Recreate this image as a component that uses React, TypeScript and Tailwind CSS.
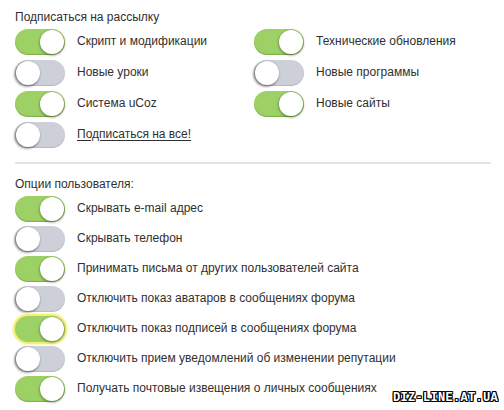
import React from "react";

type Item = { label: string; on: boolean; link?: boolean; glow?: boolean };

function Toggle({ on, glow }: { on: boolean; glow?: boolean }) {
  const base = "relative h-[26px] w-[50px] shrink-0 rounded-full ";
  const track = on
    ? glow
      ? "bg-[#9dd065] shadow-[0_0_0_2px_#f2ef74,0_0_2px_3px_#faf8c4]"
      : "bg-[#9dd065] shadow-[inset_0_-1px_1px_rgba(60,110,20,0.35)]"
    : "bg-[#cdd0d8] shadow-[inset_0_-1px_1px_rgba(0,0,0,0.12)]";
  return (
    <div className={base + track}>
      <div
        className={
          "absolute top-[1px] h-[24px] w-[24px] rounded-full bg-white " +
          (on
            ? "right-[1px] shadow-[0_1px_2px_1px_rgba(0,0,0,0.25)]"
            : "left-[1px] shadow-[-1px_1px_2px_1px_rgba(0,0,0,0.35)]")
        }
      />
    </div>
  );
}

function Row({ item }: { item: Item }) {
  return (
    <div className="flex h-[26px] items-center gap-[12px]">
      <Toggle on={item.on} glow={item.glow} />
      <span
        className={
          "-mt-[3px] text-[12px] leading-[16px] text-[#303030] " +
          (item.link ? "underline underline-offset-2" : "")
        }
      >
        {item.label}
      </span>
    </div>
  );
}

const left: Item[] = [
  { label: "Скрипт и модификации", on: true },
  { label: "Новые уроки", on: false },
  { label: "Система uCoz", on: true },
  { label: "Подписаться на все!", on: false, link: true },
];
const right: Item[] = [
  { label: "Технические обновления", on: true },
  { label: "Новые программы", on: false },
  { label: "Новые сайты", on: true },
];
const user: Item[] = [
  { label: "Скрывать e-mail адрес", on: true },
  { label: "Скрывать телефон", on: false },
  { label: "Принимать письма от других пользователей сайта", on: true },
  { label: "Отключить показ аватаров в сообщениях форума", on: false },
  { label: "Отключить показ подписей в сообщениях форума", on: true, glow: true },
  { label: "Отключить прием уведомлений об изменении репутации", on: false },
  { label: "Получать почтовые извещения о личных сообщениях", on: true },
];

export default function App() {
  return (
    <div
      className="relative h-[410px] w-[504px] overflow-hidden bg-white pl-[15px] pr-[13px] pt-[8px]"
      style={{ fontFamily: '"Liberation Sans", Arial, sans-serif' }}
    >
      <div className="h-[18px] text-[12px] leading-[18px] text-[#303030]">Подписаться на рассылку</div>
      <div className="mt-[3px] grid grid-cols-[239px_1fr]">
        <div className="flex flex-col gap-[5px]">
          {left.map((it) => (
            <Row key={it.label} item={it} />
          ))}
        </div>
        <div className="flex flex-col gap-[5px]">
          {right.map((it) => (
            <Row key={it.label} item={it} />
          ))}
        </div>
      </div>
      <div className="mt-[14px] h-[2px] bg-[#e3e3e3]" />
      <div className="mt-[11px] h-[18px] text-[12px] leading-[18px] text-[#303030]">Опции пользователя:</div>
      <div className="mt-[3px] flex flex-col gap-[4px]">
        {user.map((it) => (
          <Row key={it.label} item={it} />
        ))}
      </div>
      <div
        className="absolute bottom-[6px] right-[6px] text-[12px] font-bold leading-[12px] tracking-[0.3px] text-white"
        style={{
          fontFamily: '"Liberation Mono", monospace',
          textShadow:
            "1px 0 0 #000, -1px 0 0 #000, 0 1px 0 #000, 0 -1px 0 #000, 1px 1px 0 #000, -1px -1px 0 #000, 1px -1px 0 #000, -1px 1px 0 #000",
        }}
      >
        DIZ-LINE.AT.UA
      </div>
    </div>
  );
}
